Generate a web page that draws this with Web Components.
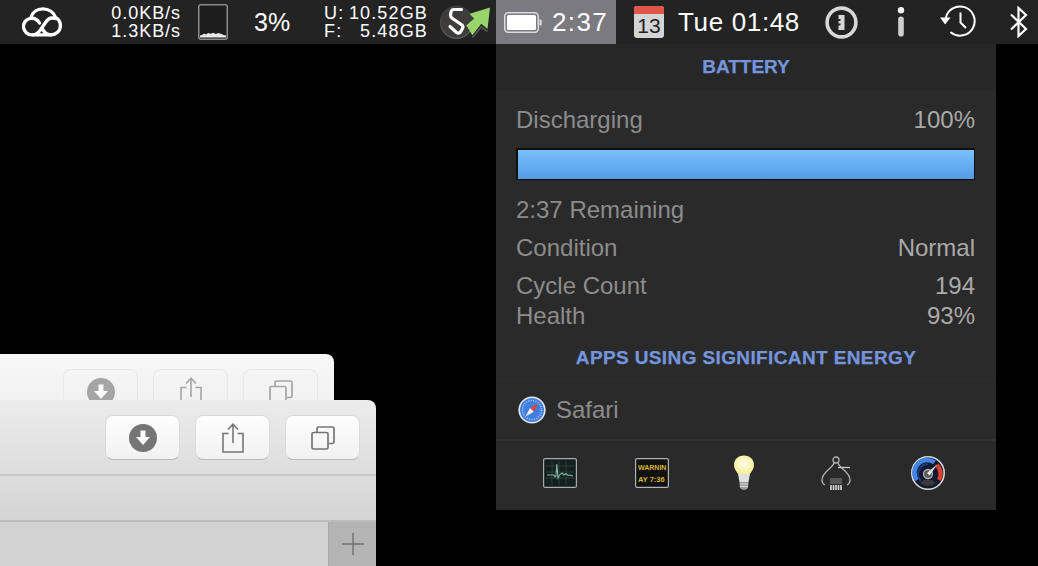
<!DOCTYPE html>
<html>
<head>
<meta charset="utf-8">
<style>
  html, body { margin: 0; padding: 0; background: #000; }
  body { width: 1038px; height: 566px; overflow: hidden; font-family: "Liberation Sans", Arial, sans-serif; }
</style>
</head>
<body>
<mac-desktop>
  <menu-bar>
    <menu-item style="margin-left:22px;width:40px">
      <svg width="40" height="30" viewBox="0 0 40 30" fill="none" stroke="#fff" stroke-width="3.3" stroke-linecap="round" stroke-linejoin="round">
        <path d="M29 27.8 H10 A8.3 8.3 0 0 1 8.5 11.3 C10 5.5 15 1.8 21 1.8 C27 1.8 32 5.5 33.5 10.5 C36.5 12 38.4 15 38.4 18.8 C38.4 24 34 27.8 29 27.8 Z"/>
        <path d="M11 27.8 C14 27.8 16 26 18 23.5 L23.5 15.5 C25.5 12.5 27.5 11 30 11 C31.5 11 32.5 11 33.5 11.5"/>
        <path d="M9 11.3 C13 11 16 13.5 17.5 16"/>
        <path d="M29 27.8 C25 27.8 22 25 20.5 22"/>
      </svg>
    </menu-item>
    <menu-item style="margin-left:39px;width:80px">
      <two-lines align="right"><span>0.0KB/s</span><span>1.3KB/s</span></two-lines>
    </menu-item>
    <menu-item style="margin-left:17px;width:30px">
      <svg width="30" height="36" viewBox="0 0 30 36">
        <rect x="0.75" y="0.75" width="28.5" height="34.5" rx="2" fill="#1d1d1d" stroke="#8c8c8c" stroke-width="1.5"/>
        <path d="M2 33.5 V31.5 L4 31 L6 29.5 L8 30.5 L10 29 L13 29.8 L15 28.8 L18 30 L20 29 L23 29.8 L25 30.8 L28 31.5 V33.5 Z" fill="#e8e8e8"/>
      </svg>
    </menu-item>
    <menu-item style="margin-left:26px;width:36px;font-size:25px">3%</menu-item>
    <menu-item style="margin-left:34px;width:104px">
      <two-lines columns><span>U:</span><span>10.52GB</span><span>F:</span><span>5.48GB</span></two-lines>
    </menu-item>
    <menu-item style="margin-left:12px;width:52px">
      <svg width="52" height="44" viewBox="0 0 52 44">
        <circle cx="16.5" cy="22.5" r="16.5" fill="#5a5a5a"/>
        <circle cx="16.5" cy="21.5" r="16" fill="#3d3c3b"/>
        <path d="M21.5 9.5 H14 Q11.5 9.5 11 12 L10.5 15 Q10.5 17 12.5 18.5 L22 25 Q23.5 26.5 22.5 28.5 L20.5 32 Q18.5 34 16.5 32.5 L10 26.5" fill="none" stroke="#fff" stroke-width="3.2" stroke-linejoin="round" stroke-linecap="round"/>
        <path d="M32.5 37.5 L41.3 27 L47.5 31.5" fill="none" stroke="#55534f" stroke-width="1.8"/>
        <path d="M50 7.5 L47.5 29 L41.3 23.7 L32.3 35.3 L26.3 25.3 L34 18.7 L29.7 13.7 Z" fill="#97d469"/>
      </svg>
    </menu-item>
    <menu-item active style="margin-left:4px;width:120px;padding-left:8px;font-size:26px;letter-spacing:1.4px">
      <svg width="38" height="21" viewBox="0 0 38 21" style="margin-right:10px;flex:none">
        <rect x="0.75" y="0.75" width="33.5" height="19.5" rx="3.5" fill="none" stroke="#dcdcdc" stroke-width="1.5"/>
        <rect x="3" y="3" width="29" height="15" rx="1.5" fill="#fff"/>
        <path d="M35.5 7.5 h1 a1.2 1.2 0 0 1 1.2 1.2 v3.6 a1.2 1.2 0 0 1 -1.2 1.2 h-1 z" fill="#dcdcdc"/>
      </svg>2:37
    </menu-item>
    <menu-item style="margin-left:18px;width:30px">
      <cal-icon>13</cal-icon>
    </menu-item>
    <menu-item style="margin-left:14px;width:122px;font-size:26px;letter-spacing:.65px;white-space:nowrap">Tue 01:48</menu-item>
    <menu-item style="margin-left:25px;width:33px">
      <svg width="33" height="33" viewBox="0 0 33 33">
        <circle cx="16.5" cy="16.5" r="14.4" fill="none" stroke="#d8d8d8" stroke-width="3.6"/>
        <path d="M13.5 9 h6 v15 h-6 v-4.5 h2 v-2 h-2 v-2.5 h2 v-2 h-2 z" fill="#d8d8d8"/>
      </svg>
    </menu-item>
    <menu-item style="margin-left:39px;width:8px">
      <svg width="8" height="30" viewBox="0 0 8 30">
        <circle cx="4" cy="3.2" r="3.2" fill="#f2f2f2"/>
        <rect x="1.2" y="9.5" width="5.6" height="20" rx="2.8" fill="#cfcfcf"/>
      </svg>
    </menu-item>
    <menu-item style="margin-left:35px;width:37px">
      <svg width="37" height="34" viewBox="0 0 37 34" fill="none" stroke="#fff" stroke-width="2">
        <path d="M5.6 14 A14.6 14.6 0 1 1 11 27.5" stroke-linecap="round"/>
        <path d="M0 12.5 H10.5 L5.2 19.5 Z" fill="#fff" stroke="none"/>
        <path d="M20.5 7.5 V17.5 L26 23" />
      </svg>
    </menu-item>
    <menu-item style="margin-left:33px;width:18px">
      <svg width="18" height="32" viewBox="0 0 18 32" fill="none" stroke="#fff" stroke-width="2.2" stroke-linejoin="miter">
        <path d="M1 8.5 L16 23 L8.5 30 V2 L16 9 L1 23.5"/>
      </svg>
    </menu-item>
  </menu-bar>

  <browser-window style="top:354px;width:334px;height:60px" faded>
    <tool-button><svg-down></svg-down></tool-button>
    <tool-button><svg-share></svg-share></tool-button>
    <tool-button><svg-tabs></svg-tabs></tool-button>
  </browser-window>
  <browser-window style="top:400px;width:376px;height:166px" tabs>
    <tool-button><svg-down></svg-down></tool-button>
    <tool-button><svg-share></svg-share></tool-button>
    <tool-button><svg-tabs></svg-tabs></tool-button>
  </browser-window>

  <battery-popover style="left:496px;top:44px">
    <section-title slot="head" tall>BATTERY</section-title>
    <popover-row style="height:30px;margin-top:15px"><span>Discharging</span><b slot="value">100%</b></popover-row>
    <charge-bar style="margin-top:13px"></charge-bar>
    <popover-row style="height:30px;margin-top:15px"><span>2:37 Remaining</span></popover-row>
    <popover-row style="height:30px;margin-top:8px"><span>Condition</span><b slot="value">Normal</b></popover-row>
    <popover-row style="height:30px;margin-top:8px"><span>Cycle Count</span><b slot="value">194</b></popover-row>
    <popover-row style="height:30px"><span>Health</span><b slot="value">93%</b></popover-row>
    <section-title slot="apps">APPS USING SIGNIFICANT ENERGY</section-title>
    <app-row slot="apps">
      <svg slot="icon" width="28" height="28" viewBox="0 0 28 28">
        <circle cx="14" cy="14" r="13.6" fill="#e6e8ee"/>
        <circle cx="14" cy="14" r="12" fill="#3f7fe0"/>
        <circle cx="14" cy="14" r="9.5" fill="none" stroke="#a9c8f4" stroke-width="1.6" stroke-dasharray="1 1.4"/>
        <path d="M20.5 7.5 L12 12 L15.8 15.8 Z" fill="#e8413a"/>
        <path d="M7.5 20.5 L12 12 L15.8 15.8 Z" fill="#f4f4f4"/>
      </svg>
      Safari
    </app-row>
    <icon-dock slot="dock">
      <svg width="34" height="30" viewBox="0 0 34 30">
        <rect x=".6" y=".6" width="32.8" height="28.8" rx="1.5" fill="#14201d" stroke="#a4acae" stroke-width="1.2"/>
        <path d="M3 8 H31 M3 14 H31 M3 20 H31 M9 3 V27 M16 3 V27 M23 3 V27" stroke="#30463f" stroke-width=".8"/>
        <path d="M4 17 H11 L12 19 L13 18 L13.8 6 L15 20 L16.5 17 L19 15 L21 17 L23 15.5 L25 17.5 L27 17 L30 18" fill="none" stroke="#7fb8a4" stroke-width="1.1"/>
      </svg>
      <svg width="34" height="30" viewBox="0 0 34 30">
        <rect x=".6" y=".6" width="32.8" height="28.8" rx="1.5" fill="#111" stroke="#aeb4b8" stroke-width="1.2"/>
        <text x="3" y="12" font-family="Liberation Sans, sans-serif" font-weight="700" font-size="7" fill="#d8b52a">WARNIN</text>
        <text x="3" y="24" font-family="Liberation Sans, sans-serif" font-weight="700" font-size="7.5" fill="#d8b52a">AY 7:36</text>
      </svg>
      <svg width="22" height="37" viewBox="0 0 22 37">
        <defs><radialGradient id="bulb" cx=".5" cy=".45" r=".6"><stop offset="0" stop-color="#fffef0"/><stop offset="1" stop-color="#f8eb8c"/></radialGradient></defs>
        <path d="M11 .5 C5 .5 1 4.5 1 10 C1 14 3.5 16 5 19 H17 C18.5 16 21 14 21 10 C21 4.5 17 .5 11 .5 Z" fill="url(#bulb)"/>
        <path d="M5 19 L6.5 27 H15.5 L17 19 Z" fill="#e0e0dc"/>
        <path d="M6.5 27 H15.5 L15 33 Q11 37 7 33 Z" fill="#9b9b9b"/>
        <path d="M6.8 29 H15.2 M6.8 31.5 H15" stroke="#dcdcdc" stroke-width="1"/>
      </svg>
      <svg width="30" height="35" viewBox="0 0 30 35" fill="none" stroke="#b4b4b4" stroke-width="1.3">
        <circle cx="15" cy="4" r="3"/>
        <path d="M13 7 C11 13 1 16 1 24 C1 26 2 28 4 29 M17 7 C19 13 29 16 29 24 C29 26 28 28 26 29"/>
        <path d="M17 11.5 H29" stroke="#c8c8c8"/>
        <rect x="9" y="22" width="12" height="6" fill="#565656" stroke="none"/>
        <path d="M10 29 V34 M12.5 29 V34 M15 29 V34 M17.5 29 V34 M20 29 V34" stroke="#dadada" stroke-width="1.6"/>
      </svg>
      <svg width="34" height="34" viewBox="0 0 34 34">
        <circle cx="17" cy="17" r="16.2" fill="#12182e" stroke="#d8d8d8" stroke-width="1.6"/>
        <path d="M6 24 A12.5 12.5 0 0 1 23.5 6.5" fill="none" stroke="#3f86e6" stroke-width="4.5"/>
        <path d="M26 9 A12.5 12.5 0 0 1 28 24" fill="none" stroke="#d8432f" stroke-width="4.5"/>
        <path d="M10 25 A10 10 0 0 1 17 8" fill="none" stroke="#213a78" stroke-width="2"/>
        <circle cx="17" cy="18" r="4.5" fill="#5a5a5a" stroke="#b0b0b0" stroke-width="1.3"/>
        <path d="M16 17 L26.5 8 L18.5 19.5 Z" fill="#e8e8e8"/>
        <path d="M9 27 Q17 33 25 27 L21 24 H13 Z" fill="#3a3a3c"/>
      </svg>
    </icon-dock>
  </battery-popover>
</mac-desktop>

<script>
class MacDesktop extends HTMLElement {
  connectedCallback() {
    this.attachShadow({ mode: "open" }).innerHTML = `
      <style>
        :host { display: block; position: relative; width: 1038px; height: 566px; background: #000; overflow: hidden; }
      </style>
      <slot></slot>`;
  }
}

class MenuBar extends HTMLElement {
  connectedCallback() {
    this.attachShadow({ mode: "open" }).innerHTML = `
      <style>
        :host { display: flex; height: 44px; background: #232323; color: #fff; align-items: stretch; }
      </style>
      <slot></slot>`;
  }
}

class MenuItem extends HTMLElement {
  connectedCallback() {
    this.attachShadow({ mode: "open" }).innerHTML = `
      <style>
        :host { display: flex; flex: none; align-items: center; box-sizing: border-box; height: 44px; font-size: 17px; }
        :host([active]) { background: #7b7a80; }
      </style>
      <slot></slot>`;
  }
}

class TwoLines extends HTMLElement {
  connectedCallback() {
    const cols = this.hasAttribute("columns");
    this.attachShadow({ mode: "open" }).innerHTML = `
      <style>
        :host { display: grid; width: 100%; line-height: 18px; font-size: 18px; letter-spacing: ${cols ? "1.15px" : ".95px"}; white-space: nowrap;
                grid-template-columns: ${cols ? "auto 1fr" : "1fr"}; justify-items: ${cols ? "start" : "end"}; padding-bottom: 1px; }
        ::slotted(span:nth-child(even)) { justify-self: end; }
      </style>
      <slot></slot>`;
  }
}

class CalIcon extends HTMLElement {
  connectedCallback() {
    this.attachShadow({ mode: "open" }).innerHTML = `
      <style>
        :host { display: block; width: 30px; height: 32px; border-radius: 3px; overflow: hidden; background: #d4d4d4; }
        .top { height: 8px; background: #e0574a; }
        .day { text-align: center; font-size: 21px; line-height: 23px; color: #222; }
      </style>
      <div class="top"></div>
      <div class="day"><slot></slot></div>`;
  }
}

class BrowserWindow extends HTMLElement {
  connectedCallback() {
    const tabs = this.hasAttribute("tabs");
    this.attachShadow({ mode: "open" }).innerHTML = `
      <style>
        :host { display: block; position: absolute; left: 0; box-sizing: border-box; overflow: hidden; border-top-right-radius: 8px;
                background: linear-gradient(#ededed, #e2e2e2); }
        :host([faded]) { background: linear-gradient(#f7f7f7, #f0f0f0); }
        :host([tabs]) { background: linear-gradient(#ececec, #d3d3d3 75%); }
        .bar { display: flex; justify-content: flex-end; gap: 15px; padding: 15px 16px 14px 0; height: 45px; border-bottom: 2px solid #c8c8c8; }
        :host([faded]) .bar { border-bottom: 0; }
        .tabs { height: 44px; border-bottom: 2px solid #bdbdbd; }
        .strip { display: flex; justify-content: flex-end; height: 44px; background: #d2d2d2; }
        .plus { width: 47px; border-left: 1px solid #a9a9a9; background: #b4b4b4; display: flex; align-items: center; justify-content: center; }
      </style>
      <div class="bar"><slot></slot></div>
      ${tabs ? `<div class="tabs"></div>
      <div class="strip"><div class="plus">
        <svg width="24" height="24" viewBox="0 0 24 24"><path d="M1 12 H23 M12 1 V23" stroke="#707070" stroke-width="1.4"/></svg>
      </div></div>` : ""}`;
  }
}

class ToolButton extends HTMLElement {
  connectedCallback() {
    this.attachShadow({ mode: "open" }).innerHTML = `
      <style>
        :host { display: flex; align-items: center; justify-content: center; box-sizing: border-box; width: 75px; height: 45px;
                border-radius: 8px; background: linear-gradient(#fefefe, #f1f1f1); border: 1px solid #dadada; border-bottom: 1.5px solid #b9b9b9; }
        :host-context(browser-window[faded]) { background: transparent; border-color: #e0e0e0; opacity: .62; }
      </style>
      <slot></slot>`;
  }
}

class SvgDown extends HTMLElement {
  connectedCallback() {
    this.attachShadow({ mode: "open" }).innerHTML = `
      <style>:host { display: block; height: 28px; }</style>
      <svg width="28" height="28" viewBox="0 0 28 28">
        <circle cx="14" cy="14" r="14" fill="#757575"/>
        <path d="M11.5 6.5 H16.5 V13 H21 L14 21 L7 13 H11.5 Z" fill="#fff"/>
      </svg>`;
  }
}

class SvgShare extends HTMLElement {
  connectedCallback() {
    this.attachShadow({ mode: "open" }).innerHTML = `
      <style>:host { display: block; height: 30px; }</style>
      <svg width="22" height="30" viewBox="0 0 22 30" fill="none" stroke="#757575" stroke-width="1.6">
        <path d="M6.5 10.5 H1 V29 H21 V10.5 H15.5"/>
        <path d="M11 20 V1.5 M6 6.5 L11 1.2 L16 6.5"/>
      </svg>`;
  }
}

class SvgTabs extends HTMLElement {
  connectedCallback() {
    this.attachShadow({ mode: "open" }).innerHTML = `
      <style>:host { display: block; height: 24px; }</style>
      <svg width="24" height="24" viewBox="0 0 24 24" fill="none" stroke="#757575" stroke-width="1.7">
        <rect x="1" y="6.5" width="16" height="16.5" rx="1.5"/>
        <path d="M6 6 V2.5 Q6 1 7.5 1 H21.5 Q23 1 23 2.5 V16 Q23 17.5 21.5 17.5 H18"/>
      </svg>`;
  }
}

class BatteryPopover extends HTMLElement {
  connectedCallback() {
    this.attachShadow({ mode: "open" }).innerHTML = `
      <style>
        :host { display: block; position: absolute; width: 500px; height: 466px; background: #2a2a2a; color: #8c8c8c; font-size: 24px; }
        .head { background: #272727; }
        .body { padding: 0 21px 0 20px; }
        .foot { border-top: 2px solid #343434; }
      </style>
      <div class="head"><slot name="head"></slot></div>
      <div class="body"><slot></slot></div>
      <slot name="apps"></slot>
      <div class="foot"><slot name="dock"></slot></div>`;
  }
}

class SectionTitle extends HTMLElement {
  connectedCallback() {
    this.attachShadow({ mode: "open" }).innerHTML = `
      <style>
        :host { display: block; height: 46px; line-height: 46px; text-align: center; font-weight: 700; font-size: 19px; color: #7495dd; white-space: nowrap; -webkit-text-stroke: .25px #7495dd; }
        :host(:not([tall])) { height: 50px; line-height: 54px; letter-spacing: .38px; border-bottom: 1px solid #2e2e2e; box-sizing: border-box; }
      </style>
      <slot></slot>`;
  }
}

class PopoverRow extends HTMLElement {
  connectedCallback() {
    this.attachShadow({ mode: "open" }).innerHTML = `
      <style>
        :host { display: flex; justify-content: space-between; align-items: center; box-sizing: border-box; line-height: 30px; }
        ::slotted(b) { font-weight: 400; color: #a9a9a9; }
      </style>
      <slot></slot>
      <slot name="value"></slot>`;
  }
}

class ChargeBar extends HTMLElement {
  connectedCallback() {
    this.attachShadow({ mode: "open" }).innerHTML = `
      <style>
        :host { display: block; box-sizing: border-box; height: 32px; border: 2px solid #0e0e0e; border-right-width: 1px; border-bottom-width: 1px;
                background: linear-gradient(#78c0fc, #559ce8); }
      </style>`;
  }
}

class AppRow extends HTMLElement {
  connectedCallback() {
    this.attachShadow({ mode: "open" }).innerHTML = `
      <style>
        :host { display: flex; align-items: center; gap: 10px; height: 58px; padding-left: 22px; box-sizing: border-box; }
        ::slotted(svg) { flex: none; }
      </style>
      <slot name="icon"></slot><slot></slot>`;
  }
}

class IconDock extends HTMLElement {
  connectedCallback() {
    this.attachShadow({ mode: "open" }).innerHTML = `
      <style>
        :host { display: grid; grid-template-columns: repeat(5, 92px); justify-items: center; align-items: center; box-sizing: border-box; height: 70px; padding: 0 0 6px 18px; }
      </style>
      <slot></slot>`;
  }
}

customElements.define("mac-desktop", MacDesktop);
customElements.define("menu-bar", MenuBar);
customElements.define("menu-item", MenuItem);
customElements.define("two-lines", TwoLines);
customElements.define("cal-icon", CalIcon);
customElements.define("browser-window", BrowserWindow);
customElements.define("tool-button", ToolButton);
customElements.define("svg-down", SvgDown);
customElements.define("svg-share", SvgShare);
customElements.define("svg-tabs", SvgTabs);
customElements.define("battery-popover", BatteryPopover);
customElements.define("section-title", SectionTitle);
customElements.define("popover-row", PopoverRow);
customElements.define("charge-bar", ChargeBar);
customElements.define("app-row", AppRow);
customElements.define("icon-dock", IconDock);
</script>
</body>
</html>
